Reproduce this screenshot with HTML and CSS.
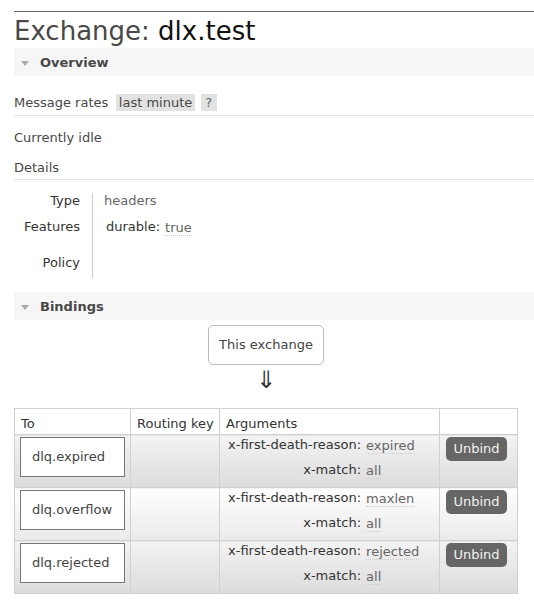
FILE: index.html
```html
<!DOCTYPE html>
<html>
<head>
<meta charset="utf-8">
<link rel="stylesheet" href="styles.css">
</head>
<body>
<div class="main">
  <h1>Exchange: <b>dlx.test</b></h1>
  <div class="section">
    <h2 class="bar"><span class="tri"></span>Overview</h2>
    <h3 class="rates"><span>Message rates</span><span class="opt">last minute</span><span class="help">?</span></h3>
    <p class="idle">Currently idle</p>
    <h3 class="details">Details</h3>
    <div class="facts">
      <div class="fk r1">Type</div><div class="fv r1">headers</div>
      <div class="fk r2">Features</div><div class="fv r2 feat"><span class="fkey">durable:</span><span class="abbr">true</span></div>
      <div class="fk r3">Policy</div><div class="fv r3"></div>
    </div>
  </div>
  <div class="section bindings-section">
    <h2 class="bar"><span class="tri"></span>Bindings</h2>
    <div class="bindings">
      <div class="this"><span class="object">This exchange</span></div>
      <p class="arrow">⇓</p>
      <table class="list">
        <colgroup><col class="c1"><col class="c2"><col class="c3"><col class="c4"></colgroup>
        <thead>
          <tr><th>To</th><th>Routing key</th><th>Arguments</th><th></th></tr>
        </thead>
        <tbody>
          <tr class="alt1">
            <td><span class="queue">dlq.expired</span></td>
            <td></td>
            <td><div class="args"><span class="ak">x-first-death-reason:</span><span class="av"><span class="abbr">expired</span></span><span class="ak">x-match:</span><span class="av"><span class="abbr">all</span></span></div></td>
            <td><span class="btn">Unbind</span></td>
          </tr>
          <tr class="alt2">
            <td><span class="queue">dlq.overflow</span></td>
            <td></td>
            <td><div class="args"><span class="ak">x-first-death-reason:</span><span class="av"><span class="abbr">maxlen</span></span><span class="ak">x-match:</span><span class="av"><span class="abbr">all</span></span></div></td>
            <td><span class="btn">Unbind</span></td>
          </tr>
          <tr class="alt1">
            <td><span class="queue">dlq.rejected</span></td>
            <td></td>
            <td><div class="args"><span class="ak">x-first-death-reason:</span><span class="av"><span class="abbr">rejected</span></span><span class="ak">x-match:</span><span class="av"><span class="abbr">all</span></span></div></td>
            <td><span class="btn">Unbind</span></td>
          </tr>
        </tbody>
      </table>
    </div>
  </div>
</div>
</body>
</html>
```
FILE: styles.css
```css
body {
  margin: 0;
  font-family: "DejaVu Sans", Verdana, sans-serif;
  font-size: 13px;
  line-height: 15px;
  color: #484848;
  background: #fff;
}
.main {
  margin: 11px 0 0 14px;
  border-top: 1px solid #666;
}
h1 {
  font-size: 26px;
  line-height: 30px;
  font-weight: normal;
  margin: 4px 0 2px;
  color: #484848;
}
h1 b {
  font-weight: normal;
  color: #111;
}
.bar {
  display: flex;
  align-items: center;
  height: 28px;
  margin: 0;
  padding-left: 7px;
  background: #f6f6f6;
  font-size: 13px;
  font-weight: bold;
  color: #484848;
}
.tri {
  width: 0;
  height: 0;
  border-left: 4.5px solid transparent;
  border-right: 4.5px solid transparent;
  border-top: 5px solid #aaa;
  margin: 2px 11px 0 0;
}
.rates {
  display: flex;
  align-items: center;
  margin: 18px 0 0;
  padding-bottom: 4px;
  border-bottom: 1px solid #e4e4e4;
  font-size: 13px;
  font-weight: normal;
  line-height: 17px;
}
.opt {
  margin-left: 8px;
  padding: 0 2.5px;
  background: #e2e2e2;
}
.help {
  margin-left: 6px;
  padding: 0 4.5px;
  background: #e2e2e2;
  color: #666;
}
.idle {
  margin: 14px 0 0;
}
.details {
  margin: 15px 0 0;
  padding-bottom: 4px;
  border-bottom: 1px solid #e4e4e4;
  font-size: 13px;
  font-weight: normal;
}
.facts {
  display: grid;
  grid-template-columns: 78px 1fr;
  margin-top: 13px;
}
.fk {
  text-align: right;
  padding-right: 12px;
  color: #333;
}
.fv {
  border-left: 1px solid #ccc;
  padding-left: 11px;
  color: #666;
}
.r1 { height: 15px; padding-bottom: 11px; }
.r2 { height: 15px; padding-bottom: 21px; }
.r3 { height: 15px; padding-bottom: 8px; }
.feat {
  display: flex;
  align-items: flex-start;
  gap: 5px;
}
.fkey {
  color: #333;
  margin-left: 2px;
}
.abbr {
  color: #666;
  border-bottom: 1px dotted #ccc;
}
.feat .abbr {
  margin-top: 2px;
  line-height: 14px;
}
.bindings-section {
  margin-top: 14px;
}
.bindings {
  display: inline-block;
}
.this {
  display: flex;
  justify-content: center;
  margin-top: 5px;
}
.object {
  border: 1px solid #bbb;
  border-radius: 5px;
  padding: 11px 10px;
  line-height: 16px;
  color: #444;
}
.arrow {
  margin: 2px 0 0;
  height: 41px;
  text-align: center;
  font-size: 24px;
  line-height: 26px;
  color: #333;
}
.list {
  border-collapse: collapse;
  table-layout: fixed;
  width: 504px;
}
.c1 { width: 116px; }
.c2 { width: 89px; }
.c3 { width: 220px; }
.c4 { width: 78px; }
.list th, .list td {
  border: 1px solid #d0d0d0;
  vertical-align: top;
  text-align: left;
  white-space: nowrap;
}
.list th {
  font-weight: normal;
  color: #333;
  padding: 7px 6px 3px;
  background: #fff;
}
.list td {
  padding: 2px 5px 0;
}
.list td:nth-child(3) {
  padding-left: 8px;
}
.list td:nth-child(4) {
  padding-left: 6px;
}
.alt1 td {
  background: linear-gradient(#f3f3f3, #dcdcdc);
}
.alt2 td {
  background: linear-gradient(#fefefe, #eaeaea);
}
.queue {
  display: block;
  box-sizing: border-box;
  width: 105px;
  height: 40px;
  padding: 0 11px;
  line-height: 38px;
  border: 1px solid #777;
  background: #fff;
  color: #444;
}
.args {
  display: grid;
  grid-template-columns: auto auto;
  justify-content: start;
  grid-auto-rows: 25px;
  column-gap: 5px;
}
.ak {
  text-align: right;
  color: #333;
}
.av {
  text-align: left;
  padding-top: 1px;
}
.btn {
  display: block;
  width: 61px;
  height: 24px;
  line-height: 24px;
  text-align: center;
  background: #666;
  color: #f2f2f2;
  border-radius: 5px;
}
```
